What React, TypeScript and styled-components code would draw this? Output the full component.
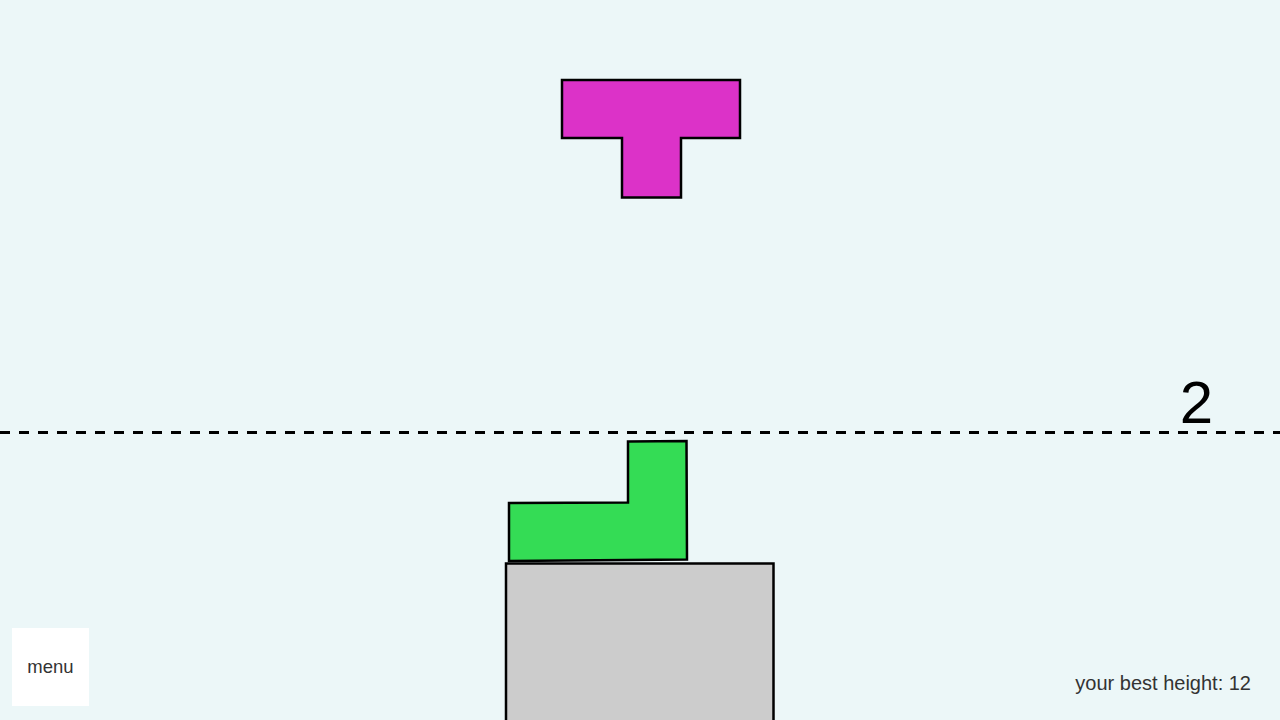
import React from "react";
import styled, { createGlobalStyle } from "styled-components";

const GlobalStyle = createGlobalStyle`
  html, body {
    margin: 0;
    padding: 0;
    background: #ecf7f8;
    overflow: hidden;
  }
  body {
    font-family: "Liberation Sans", Arial, sans-serif;
  }
`;

const Stage = styled.div`
  position: relative;
  width: 1280px;
  height: 720px;
  background: #ecf7f8;
  overflow: hidden;
`;

const Board = styled.svg`
  display: block;
  width: 1280px;
  height: 720px;
`;

const HeightLabel = styled.div`
  position: absolute;
  top: 370px;
  right: 67px;
  font-family: "Liberation Sans", Arial, sans-serif;
  font-size: 60px;
  line-height: 66px;
  color: #000;
`;

const Footer = styled.div`
  position: absolute;
  left: 12px;
  right: 29px;
  bottom: 14px;
  display: flex;
  align-items: flex-end;
  justify-content: space-between;
`;

const MenuButton = styled.button`
  width: 77px;
  height: 78px;
  border: none;
  background: #ffffff;
  font-family: "Liberation Sans", Arial, sans-serif;
  font-size: 18.5px;
  color: #333;
  padding: 0;
  cursor: pointer;
`;

const BestHeight = styled.div`
  font-family: "Liberation Sans", Arial, sans-serif;
  font-size: 20px;
  color: #333;
  margin-bottom: 11px;
`;

export default function App() {
  return (
    <>
      <GlobalStyle />
      <Stage>
        <Board viewBox="0 0 1280 720">
          <line
            x1="0"
            y1="432.5"
            x2="1280"
            y2="432.5"
            stroke="#000"
            strokeWidth="3"
            strokeDasharray="10 9"
          />
          <polygon
            points="562,80 740,80 740,138 681,138 681,197.5 622,197.5 622,138 562,138"
            fill="#dc32c8"
            stroke="#000"
            strokeWidth="2.5"
          />
          <polygon
            points="628,441.5 686.5,441 687,559.5 509,561 509,503 628,502.5"
            fill="#34dc55"
            stroke="#000"
            strokeWidth="2.5"
          />
          <rect
            x="506"
            y="563.5"
            width="267.5"
            height="170"
            fill="#cccccc"
            stroke="#000"
            strokeWidth="2.5"
          />
        </Board>
        <HeightLabel>2</HeightLabel>
        <Footer>
          <MenuButton>menu</MenuButton>
          <BestHeight>your best height: 12</BestHeight>
        </Footer>
      </Stage>
    </>
  );
}
